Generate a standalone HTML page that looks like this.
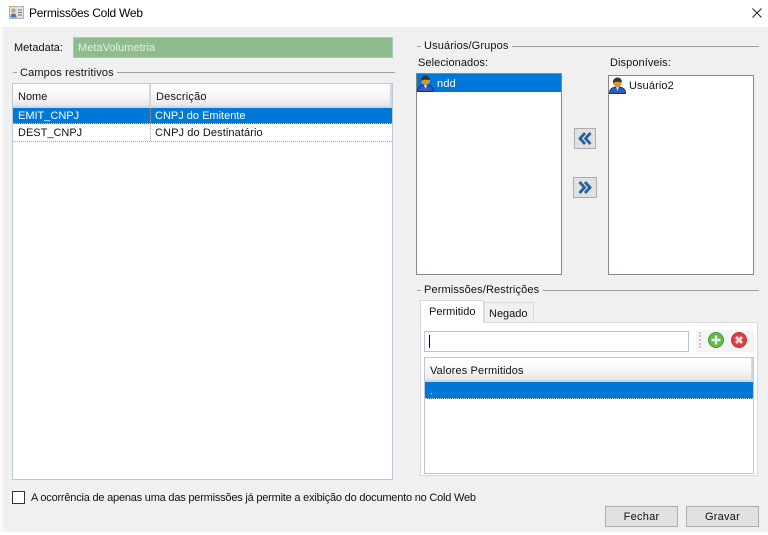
<!DOCTYPE html>
<html><head><meta charset="utf-8">
<style>
html,body{margin:0;padding:0;width:768px;height:535px;overflow:hidden;background:#fff}
body{position:relative;font-family:"Liberation Sans",sans-serif;font-size:11px;color:#111}
.a{position:absolute;box-sizing:border-box}
.t{position:absolute;white-space:nowrap;line-height:14px}
.hdr{background:linear-gradient(#fff,#f8f9fa 45%,#f0f0f0 75%,#e4e6e8);border-right:2px solid #d2d7dc;border-bottom:2px solid #d2d6da}
.list{background:#fff;border:1px solid #82878c}
.btn{background:#e1e1e1;border:1px solid #adadad;text-align:center;line-height:20px;font-size:11px;letter-spacing:.25px}
</style></head><body>
<div class="a" style="left:0;top:27px;width:768px;height:505px;background:#f0f0f0"></div>
<div class="a" style="left:0;top:27px;width:3px;height:508px;background:#fafafa"></div>

<svg class="a" style="left:9px;top:6px" width="15" height="13" viewBox="0 0 15 13"><rect x=".5" y=".5" width="14" height="12" fill="#dfe3e8" stroke="#aab2bc"/><circle cx="4.500" cy="4.500" r="2.200" fill="#d8a050"/><path d="M1.500 11.500c0-3 1.200-4 3-4s3 1 3 4z" fill="#4a78b8"/><path d="M9 4h4M9 6.500h4M9 9h4" stroke="#6a7480"/></svg>
<div class="t" style="left:29px;top:6px;font-size:12px;letter-spacing:-.25px;color:#000">Permissões Cold Web</div>
<svg class="a" style="left:752px;top:8px" width="10" height="10" viewBox="0 0 10 10"><path d="M.5.500l9 9M9.500.500l-9 9" stroke="#222" stroke-width="1"/></svg>

<div class="t" style="left:14px;top:41px">Metadata:</div>
<div class="a" style="left:73px;top:37px;width:320px;height:21px;background:#8fbc8f;border:1px solid #a9c9b4"></div>
<div class="t" style="left:78px;top:41px;color:#e4f0e4;font-size:11px;letter-spacing:.05px">MetaVolumetria</div>

<div class="a" style="left:13px;top:72px;width:4px;height:1px;background:#a0a0a0"></div>
<div class="t" style="left:20px;top:66px;letter-spacing:.15px">Campos restritivos</div>
<div class="a" style="left:117px;top:72px;width:278px;height:1px;background:#a0a0a0"></div>

<div class="a" style="left:12px;top:83px;width:381px;height:397px;background:#fff;border:1px solid #b9c9d6"></div>
<div class="a hdr" style="left:13px;top:84px;width:138px;height:24px"></div>
<div class="a hdr" style="left:151px;top:84px;width:241px;height:24px"></div>
<div class="t" style="left:18px;top:90px">Nome</div>
<div class="t" style="left:156px;top:90px;letter-spacing:.2px">Descrição</div>
<div class="a" style="left:13px;top:108px;width:379px;height:16px;background:#0078d7;border-bottom:1px dotted #bcd"></div>
<div class="a" style="left:150px;top:108px;width:1px;height:33px;border-left:1px dotted #aaa"></div>
<div class="t" style="left:18px;top:109px;color:#fff">EMIT_CNPJ</div>
<div class="t" style="left:155px;top:109px;color:#fff">CNPJ do Emitente</div>
<div class="t" style="left:18px;top:126px">DEST_CNPJ</div>
<div class="t" style="left:155px;top:126px;letter-spacing:.1px">CNPJ do Destinatário</div>
<div class="a" style="left:13px;top:141px;width:379px;height:1px;border-bottom:1px dotted #aaa"></div>

<div class="a" style="left:417px;top:46px;width:4px;height:1px;background:#a0a0a0"></div>
<div class="t" style="left:424px;top:39px;letter-spacing:.13px">Usuários/Grupos</div>
<div class="a" style="left:512px;top:46px;width:247px;height:1px;background:#a0a0a0"></div>
<div class="t" style="left:418px;top:56px;letter-spacing:.08px">Selecionados:</div>
<div class="t" style="left:610px;top:56px;letter-spacing:.08px">Disponíveis:</div>

<div class="a list" style="left:416px;top:73px;width:146px;height:202px"></div>
<div class="a" style="left:417px;top:74px;width:144px;height:18px;background:#0078d7"></div>
<svg class="a" style="left:417px;top:75px" width="17" height="17" viewBox="0 0 17 17"><path d="M.5 16.500c0-4 2-6.500 8-6.500s8 2.500 8 6.500z" fill="#2f5cc0" stroke="#12308a"/><path d="M7 10l1.500 4 1.500-4z" fill="#dde"/><circle cx="8.500" cy="5.500" r="4.500" fill="#d89a30"/><path d="M4 6c-.5-3.500 2-5.500 4.500-5.500S13 2.500 12.800 5c-2.500 0-6-1-8.800 1z" fill="#333"/></svg>
<div class="t" style="left:437px;top:77px;color:#fff;letter-spacing:.2px">ndd</div>

<div class="a list" style="left:608px;top:75px;width:146px;height:200px"></div>
<svg class="a" style="left:609px;top:77px" width="17" height="17" viewBox="0 0 17 17"><path d="M.5 16.500c0-4 2-6.500 8-6.500s8 2.500 8 6.500z" fill="#2f5cc0" stroke="#12308a"/><path d="M7 10l1.500 4 1.500-4z" fill="#dde"/><circle cx="8.500" cy="5.500" r="4.500" fill="#d89a30"/><path d="M4 6c-.5-3.500 2-5.500 4.500-5.500S13 2.500 12.800 5c-2.500 0-6-1-8.800 1z" fill="#333"/></svg>
<div class="t" style="left:629px;top:79px;letter-spacing:.1px">Usuário2</div>

<div class="a" style="left:574px;top:128px;width:22px;height:21px;background:#e1e1e1;border:1px solid #adadad"></div>
<svg class="a" style="left:578px;top:132px" width="14" height="13" viewBox="0 0 14 13"><path d="M7 1L2 6.500 7 12M12.500 1L7.500 6.500l5 5.500" fill="none" stroke="#2a5f9e" stroke-width="2.800"/></svg>
<div class="a" style="left:573px;top:177px;width:24px;height:21px;background:#e1e1e1;border:1px solid #adadad"></div>
<svg class="a" style="left:578px;top:181px" width="14" height="13" viewBox="0 0 14 13"><path d="M1.500 1l5 5.500-5 5.500M7 1l5 5.500L7 12" fill="none" stroke="#2a5f9e" stroke-width="2.800"/></svg>

<div class="a" style="left:417px;top:290px;width:4px;height:1px;background:#a0a0a0"></div>
<div class="t" style="left:424px;top:283px;letter-spacing:.13px">Permissões/Restrições</div>
<div class="a" style="left:543px;top:290px;width:216px;height:1px;background:#a0a0a0"></div>

<div class="a" style="left:420px;top:322px;width:338px;height:154px;background:#fff;border:1px solid #d9d9d9"></div>
<div class="a" style="left:484px;top:302px;width:50px;height:21px;background:#f0f0f0;border:1px solid #d9d9d9"></div>
<div class="a" style="left:420px;top:300px;width:64px;height:23px;background:#fff;border:1px solid #d9d9d9;border-bottom:0"></div>
<div class="t" style="left:429px;top:305px">Permitido</div>
<div class="t" style="left:489px;top:307px">Negado</div>

<div class="a" style="left:424px;top:331px;width:265px;height:21px;background:#fff;border:1px solid #b4c4dc"></div>
<div class="a" style="left:429px;top:335px;width:1px;height:13px;background:#000"></div>
<div class="a" style="left:696px;top:330px;width:58px;height:22px;background:#f4f4f4"></div>
<div class="a" style="left:699px;top:332px;width:2px;height:16px;border-left:2px dotted #c4c4c4"></div>
<svg class="a" style="left:707px;top:331px" width="18" height="18" viewBox="0 0 18 18"><circle cx="9" cy="9" r="7.500" fill="#68b84c" stroke="#4a9a38"/><path d="M9 4.500v9M4.500 9h9" stroke="#e8f4e0" stroke-width="2.400"/></svg>
<svg class="a" style="left:730px;top:331px" width="18" height="18" viewBox="0 0 18 18"><circle cx="9" cy="9" r="7.500" fill="#dc4044" stroke="#c03030"/><path d="M6 6l6 6M12 6l-6 6" stroke="#f4dcdc" stroke-width="2.800"/></svg>

<div class="a" style="left:424px;top:357px;width:330px;height:117px;background:#fff;border:1px solid #b9c9d6"></div>
<div class="a hdr" style="left:425px;top:358px;width:328px;height:24px"></div>
<div class="t" style="left:430px;top:364px;letter-spacing:.12px">Valores Permitidos</div>
<div class="a" style="left:425px;top:382px;width:328px;height:17px;background:#0078d7;border-bottom:1px dotted #bcd"></div>
<div class="a" style="left:431px;top:393px;width:1px;height:1px;background:#fff"></div>

<div class="a" style="left:12px;top:491px;width:13px;height:13px;background:#fff;border:1px solid #333"></div>
<div class="t" style="left:31px;top:491px;letter-spacing:-.21px">A ocorrência de apenas uma das permissões já permite a exibição do documento no Cold Web</div>

<div class="a btn" style="left:605px;top:506px;width:73px;height:21px">Fechar</div>
<div class="a btn" style="left:686px;top:506px;width:73px;height:21px">Gravar</div>
</body></html>
